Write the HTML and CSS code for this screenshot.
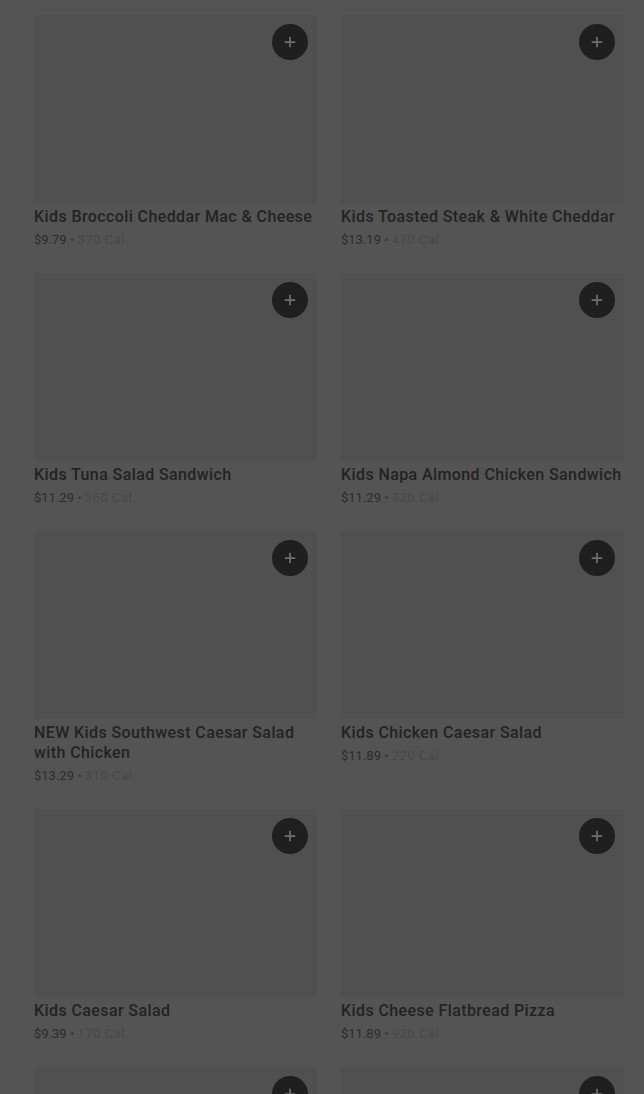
FILE: index.html
```html
<!DOCTYPE html>
<html lang="en">
<head>
    <meta charset="UTF-8">
    <meta name="viewport" content="width=device-width, initial-scale=1.0">
    <title>Kids Menu</title>
    <link rel="stylesheet" href="styles.css">
</head>
<body>
    <div class="menu-grid">
        <div class="item">
            <div class="item-img"><button class="add-btn"><svg viewBox="0 0 16 16"><path d="M8 2v12M2 8h12"/></svg></button></div>
            <h3 class="item-name">Kids Broccoli Cheddar Mac &amp; Cheese</h3>
            <p class="item-meta"><span class="price">$9.79</span> &bull; <span class="cal">370 Cal.</span></p>
        </div>
        <div class="item">
            <div class="item-img"><button class="add-btn"><svg viewBox="0 0 16 16"><path d="M8 2v12M2 8h12"/></svg></button></div>
            <h3 class="item-name">Kids Toasted Steak &amp; White Cheddar</h3>
            <p class="item-meta"><span class="price">$13.19</span> &bull; <span class="cal">470 Cal.</span></p>
        </div>
        <div class="item">
            <div class="item-img"><button class="add-btn"><svg viewBox="0 0 16 16"><path d="M8 2v12M2 8h12"/></svg></button></div>
            <h3 class="item-name">Kids Tuna Salad Sandwich</h3>
            <p class="item-meta"><span class="price">$11.29</span> &bull; <span class="cal">360 Cal.</span></p>
        </div>
        <div class="item">
            <div class="item-img"><button class="add-btn"><svg viewBox="0 0 16 16"><path d="M8 2v12M2 8h12"/></svg></button></div>
            <h3 class="item-name">Kids Napa Almond Chicken Sandwich</h3>
            <p class="item-meta"><span class="price">$11.29</span> &bull; <span class="cal">320 Cal.</span></p>
        </div>
        <div class="item">
            <div class="item-img"><button class="add-btn"><svg viewBox="0 0 16 16"><path d="M8 2v12M2 8h12"/></svg></button></div>
            <h3 class="item-name">NEW Kids Southwest Caesar Salad with Chicken</h3>
            <p class="item-meta"><span class="price">$13.29</span> &bull; <span class="cal">310 Cal.</span></p>
        </div>
        <div class="item">
            <div class="item-img"><button class="add-btn"><svg viewBox="0 0 16 16"><path d="M8 2v12M2 8h12"/></svg></button></div>
            <h3 class="item-name">Kids Chicken Caesar Salad</h3>
            <p class="item-meta"><span class="price">$11.89</span> &bull; <span class="cal">220 Cal.</span></p>
        </div>
        <div class="item">
            <div class="item-img"><button class="add-btn"><svg viewBox="0 0 16 16"><path d="M8 2v12M2 8h12"/></svg></button></div>
            <h3 class="item-name">Kids Caesar Salad</h3>
            <p class="item-meta"><span class="price">$9.39</span> &bull; <span class="cal">170 Cal.</span></p>
        </div>
        <div class="item">
            <div class="item-img"><button class="add-btn"><svg viewBox="0 0 16 16"><path d="M8 2v12M2 8h12"/></svg></button></div>
            <h3 class="item-name">Kids Cheese Flatbread Pizza</h3>
            <p class="item-meta"><span class="price">$11.89</span> &bull; <span class="cal">920 Cal.</span></p>
        </div>
        <div class="item">
            <div class="item-img"><button class="add-btn"><svg viewBox="0 0 16 16"><path d="M8 2v12M2 8h12"/></svg></button></div>
        </div>
        <div class="item">
            <div class="item-img"><button class="add-btn"><svg viewBox="0 0 16 16"><path d="M8 2v12M2 8h12"/></svg></button></div>
        </div>
    </div>
</body>
</html>
```

FILE: styles.css
```css
* {
    margin: 0;
    padding: 0;
    box-sizing: border-box;
}

body {
    background: #545454;
    font-family: 'Roboto', sans-serif;
    height: 1094px;
    overflow: hidden;
}

.menu-grid {
    display: grid;
    grid-template-columns: 283px 283px;
    column-gap: 24px;
    row-gap: 24px;
    padding: 15px 20px 0 34px;
}

.item-img {
    position: relative;
    height: 188px;
    background: #505050;
}

.add-btn {
    position: absolute;
    top: 9px;
    right: 9px;
    width: 36px;
    height: 36px;
    border: none;
    border-radius: 50%;
    background: #1f1f1f;
    display: flex;
    align-items: center;
    justify-content: center;
}

.add-btn svg {
    width: 14px;
    height: 14px;
    stroke: #6f6f6f;
    stroke-width: 2;
    fill: none;
}

.item-name {
    margin-top: 4px;
    font-size: 16px;
    font-weight: 500;
    line-height: 20px;
    letter-spacing: 0.4px;
    color: #232323;
}

.item-meta {
    margin-top: 4px;
    font-size: 13px;
    line-height: 18px;
    color: #3a3a3a;
}

.price {
    color: #2c2c2c;
}

.cal {
    color: #484848;
    letter-spacing: 0.5px;
}
```
